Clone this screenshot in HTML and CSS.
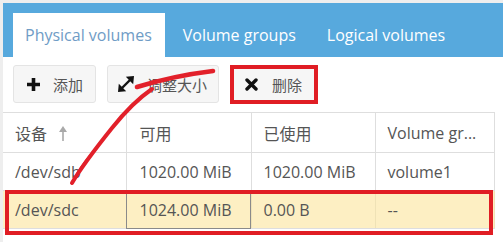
FILE: index.html
```html
<!DOCTYPE html>
<html lang="zh">
  <head>
    <meta charset="UTF-8" />
    <title>Storage</title>
    <link rel="stylesheet" href="styles.css">
  </head>
  <body>
    <div class="page">
      <!-- Tabs -->
      <ul class="tabs">
        <li class="tab active">Physical volumes</li>
        <li class="tab">Volume groups</li>
        <li class="tab">Logical volumes</li>
      </ul>

      <!-- Toolbar -->
      <div class="toolbar">
        <button class="btn">
          <svg class="icon" width="15" height="15" viewBox="0 0 15 15">
            <path d="M7.5 1v13M1 7.5h13" stroke="#111" stroke-width="3.6" />
          </svg>
          添加
        </button>
        <button class="btn btn-resize">
          <svg class="icon" width="18" height="18" viewBox="0 0 18 18">
            <path d="M5 13L13 5" stroke="#111" stroke-width="2.4" />
            <path d="M17 1L16.2 9.2 8.8 1.8Z M1 17L1.8 8.8 9.2 16.2Z" fill="#111" />
          </svg>
          调整大小
        </button>
        <button class="btn btn-marked">
          <svg class="icon" width="13" height="13" viewBox="0 0 13 13">
            <path d="M2 2l9 9M11 2l-9 9" stroke="#111" stroke-width="3.4" stroke-linecap="round" />
          </svg>
          删除
        </button>
      </div>

      <!-- Volumes table -->
      <div class="grid">
        <table>
          <colgroup>
            <col style="width: 123px" />
            <col style="width: 125px" />
            <col style="width: 124px" />
            <col style="width: 119px" />
          </colgroup>
          <thead>
            <tr>
              <th>
                设备
                <svg class="sort" width="8" height="16" viewBox="0 0 8 16">
                  <path d="M4 15V5" stroke="#a9a9a9" stroke-width="1.6" />
                  <path d="M4 0L8 6H0Z" fill="#a9a9a9" />
                </svg>
              </th>
              <th>可用</th>
              <th>已使用</th>
              <th>Volume gr...</th>
            </tr>
          </thead>
          <tbody>
            <tr>
              <td>/dev/sdb</td>
              <td>1020.00 MiB</td>
              <td>1020.00 MiB</td>
              <td>volume1</td>
            </tr>
            <tr class="selected">
              <td>/dev/sdc</td>
              <td class="focus">1024.00 MiB</td>
              <td>0.00 B</td>
              <td>--</td>
            </tr>
          </tbody>
        </table>
      </div>
    </div>

    <!-- Annotations drawn over the screenshot -->
    <div class="mark"></div>
    <svg class="pen" width="503" height="242" viewBox="0 0 503 242">
      <path d="M72 183C82 166 96 148 112 128C124 113 136 100 152 89" stroke-width="4" />
      <path d="M72 183C78 172 84 163 90 156" stroke-width="2.6" />
      <path d="M137 87C160 80 188 74 213 71" stroke-width="4.6" />
    </svg>
  </body>
</html>
```

FILE: styles.css
```css
/* Page */
body {
  margin: 0;
  background: #eeeeee;
  font-family: "Open Sans", "Noto Sans CJK SC", sans-serif;
  color: #555;
  overflow: hidden;
}

.page {
  margin: 3px 0 0 3px;
  background: #fff;
  height: 239px;
}

/* Tabs */
.tabs {
  list-style: none;
  margin: 0;
  padding: 10px 0 0 10px;
  height: 44px;
  background: #57a9dd;
  display: flex;
  gap: 6px;
}

.tab {
  padding: 0 13px 0 12px;
  height: 44px;
  line-height: 44px;
  font-size: 16px;
  color: #fff;
  white-space: nowrap;
}

.tab.active {
  background: #fff;
  color: #6f9cc6;
}

/* Toolbar */
.toolbar {
  display: flex;
  align-items: center;
  gap: 11px;
  padding: 8px 10px 9px;
  height: 38px;
}

.btn {
  display: flex;
  align-items: center;
  gap: 12px;
  height: 38px;
  padding: 0 12px;
  border: 1px solid #e4e4e4;
  border-radius: 3px;
  background: #f6f6f6;
  font-family: inherit;
  font-size: 15px;
  color: #555;
}

.btn .icon {
  flex: none;
}

.btn-resize {
  padding: 0 11px 0 9px;
}

.btn-marked {
  height: 39px;
  padding: 0 12px 0 11px;
  border: 4px solid #e01d24;
  border-radius: 0;
  gap: 14px;
}

/* Table */
.grid {
  overflow: hidden;
}

table {
  border-collapse: collapse;
  table-layout: fixed;
  width: 491px;
  font-size: 16px;
}

th,
td {
  text-align: left;
  font-weight: normal;
  padding: 0 12px;
  border-right: 1px solid #dedede;
  border-bottom: 1px solid #dedede;
  white-space: nowrap;
  overflow: hidden;
}

th {
  height: 39px;
  border-top: 1px solid #dedede;
}

td {
  height: 37px;
}

th .sort {
  margin-left: 8px;
  vertical-align: -2px;
}

th:nth-child(2),
td:nth-child(2) {
  padding-left: 13px;
}

.selected td {
  background: #fdefc3;
  border-right-color: #efe2b6;
}

.selected td.focus {
  outline: 1px solid #8a8a8a;
  outline-offset: -1px;
}

/* Annotations */
.mark {
  position: absolute;
  left: 5px;
  top: 190px;
  width: 488px;
  height: 45px;
  box-sizing: border-box;
  border: 4px solid #e01d24;
}

.pen {
  position: absolute;
  left: 0;
  top: 0;
  pointer-events: none;
}

.pen path {
  fill: none;
  stroke: #e2202a;
  stroke-linecap: round;
}
```
